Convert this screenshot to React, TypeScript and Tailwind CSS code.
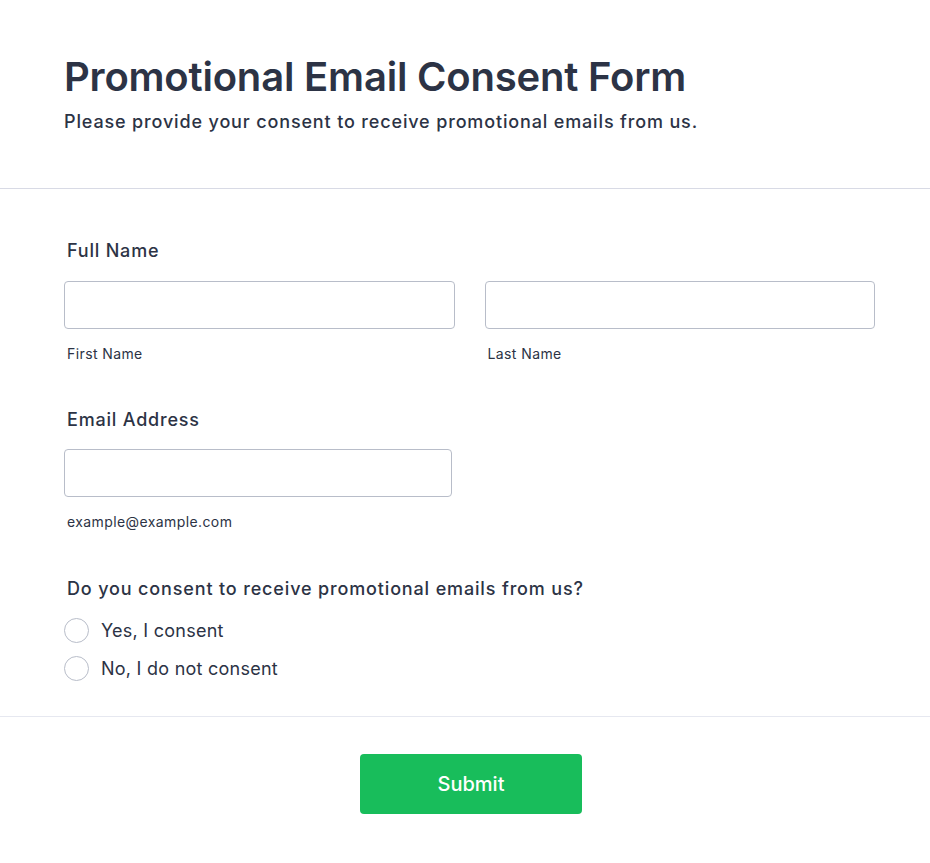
import { useState } from "react";

const font = { fontFamily: "Inter, 'Noto Sans', sans-serif" };

function TextField({ sub, className = "" }: { sub: string; className?: string }) {
  return (
    <div className={className}>
      <input
        type="text"
        className="block h-[48px] w-full rounded-[4px] border border-[#b8bdc9] bg-white px-3 text-base text-[#2c3345] outline-none"
      />
      <div className="mt-[15px] pl-[3px] text-sm leading-5 tracking-[0.4px] text-[#2c3345]">{sub}</div>
    </div>
  );
}

function Radio({ label, checked, onClick }: { label: string; checked: boolean; onClick: () => void }) {
  return (
    <label className="flex h-[25px] cursor-pointer items-center gap-3" onClick={onClick}>
      <span className="flex h-[25px] w-[25px] items-center justify-center rounded-full border border-[#b8bdc9] bg-white">
        {checked && <span className="h-[13px] w-[13px] rounded-full bg-[#2e69ff]" />}
      </span>
      <span className="text-lg leading-6 tracking-[0.25px] text-[#2c3345]">{label}</span>
    </label>
  );
}

export default function App() {
  const [consent, setConsent] = useState<string | null>(null);

  return (
    <div className="min-h-screen w-full bg-white" style={font}>
      {/* Header */}
      <div className="border-b border-[#d8dae5] pl-[64px] pr-[55px] pt-[53px] pb-[54px]">
        <h1 className="text-[40px] font-semibold leading-[48px] tracking-[-0.2px] text-[#2c3345]">
          Promotional Email Consent Form
        </h1>
        <p className="mt-[9px] text-lg font-medium leading-6 tracking-[0.85px] text-[#2c3345]">
          Please provide your consent to receive promotional emails from us.
        </p>
      </div>

      {/* Fields */}
      <div className="border-b border-[#e6e8f0] pl-[64px] pr-[55px] pt-[50px] pb-[35px]">
        <div className="pl-[3px] text-lg font-medium leading-6 tracking-[0.8px] text-[#2c3345]">Full Name</div>
        <div className="mt-[18px] grid grid-cols-2 gap-[30px]">
          <TextField sub="First Name" />
          <TextField sub="Last Name" />
        </div>

        <div className="mt-[44px] pl-[3px] text-lg font-medium leading-6 tracking-[0.8px] text-[#2c3345]">
          Email Address
        </div>
        <TextField sub="example@example.com" className="mt-[17px] w-[388px]" />

        <div className="mt-[45px] pl-[3px] text-lg font-medium leading-6 tracking-[0.85px] text-[#2c3345]">
          Do you consent to receive promotional emails from us?
        </div>
        <div className="mt-[17px] flex flex-col gap-[13px]">
          <Radio label="Yes, I consent" checked={consent === "yes"} onClick={() => setConsent("yes")} />
          <Radio label="No, I do not consent" checked={consent === "no"} onClick={() => setConsent("no")} />
        </div>
      </div>

      {/* Submit */}
      <div className="flex justify-center pl-[76px] pr-[64px] pt-[37px] pb-[50px]">
        <button
          type="button"
          className="h-[60px] w-[222px] rounded-[4px] bg-[#18bd5b] text-xl font-medium text-white"
        >
          Submit
        </button>
      </div>
    </div>
  );
}
